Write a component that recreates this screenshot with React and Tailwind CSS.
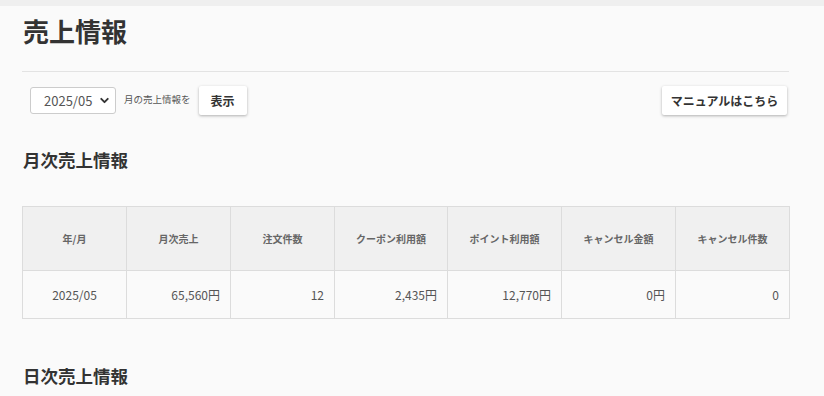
import { ChevronDown } from "lucide-react";

const font = { fontFamily: '"Noto Sans CJK JP", "Noto Sans", sans-serif' };

// 月次売上の表データ
const columns = [
    { label: "年/月", w: "w-[104px]", align: "text-center" },
    { label: "月次売上", w: "w-[104px]", align: "text-right" },
    { label: "注文件数", w: "w-[104px]", align: "text-right" },
    { label: "クーポン利用額", w: "w-[113px]", align: "text-right" },
    { label: "ポイント利用額", w: "w-[114px]", align: "text-right" },
    { label: "キャンセル金額", w: "w-[114px]", align: "text-right" },
    { label: "キャンセル件数", w: "w-[114px]", align: "text-right" },
];

const row = ["2025/05", "65,560円", "12", "2,435円", "12,770円", "0円", "0"];

export default function App() {
    return (
        <div className="min-h-[396px] bg-[#fafafa] text-[#333]" style={font}>
            <div className="h-[6px] bg-[#efefef]" />
            <div className="ml-[22px] w-[767px]">
                <h1 className="mt-[12px] text-[26px] leading-[26px] font-bold text-[#333] pl-px">売上情報</h1>
                <div className="mt-[27px] h-px bg-[#e3e3e3]" />

                {/* 表示する月を選ぶ */}
                <div className="mt-[14px] flex items-start pl-[8px] pr-[2px]">
                    <div className="relative mt-px w-[86px] h-[27px] border border-[#cccccc] rounded-[3px] bg-white flex items-center">
                        <span className="pl-[13px] text-[13px] text-[#555]">2025/05</span>
                        <ChevronDown className="absolute right-[4px] top-[6px] w-[13px] h-[13px] text-[#333]" strokeWidth={3.5} />
                    </div>
                    <span className="ml-[8px] mt-[7px] text-[9.5px] leading-[12px] text-[#555]">月の売上情報を</span>
                    <button className="ml-[8px] w-[48px] h-[29px] bg-white rounded-[2px] shadow-[0_1px_3px_rgba(0,0,0,0.3)] text-[12px] font-bold text-[#333]">
                        表示
                    </button>
                    <button className="ml-auto w-[125px] h-[29px] bg-white rounded-[2px] shadow-[0_1px_3px_rgba(0,0,0,0.3)] text-[12px] font-bold text-[#333]">
                        マニュアルはこちら
                    </button>
                </div>

                <h2 className="mt-[36px] text-[17.5px] leading-[18px] font-bold text-[#333] pl-px">月次売上情報</h2>

                {/* 月次売上テーブル */}
                <table className="mt-[37px] border-collapse table-fixed w-[767px]">
                    <thead>
                        <tr className="bg-[#f0f0f0] h-[64px]">
                            {columns.map((c) => (
                                <th key={c.label} className={`${c.w} border border-[#dcdcdc] text-[10px] font-bold text-[#666] text-center`}>
                                    {c.label}
                                </th>
                            ))}
                        </tr>
                    </thead>
                    <tbody>
                        <tr className="h-[48px] bg-[#fafafa]">
                            {row.map((v, i) => (
                                <td key={i} className={`border border-[#dcdcdc] text-[12px] text-[#555] px-[10px] ${columns[i].align}`}>
                                    {v}
                                </td>
                            ))}
                        </tr>
                    </tbody>
                </table>

                <h2 className="mt-[48px] text-[17.5px] leading-[18px] font-bold text-[#333] pl-px">日次売上情報</h2>
            </div>
        </div>
    );
}
